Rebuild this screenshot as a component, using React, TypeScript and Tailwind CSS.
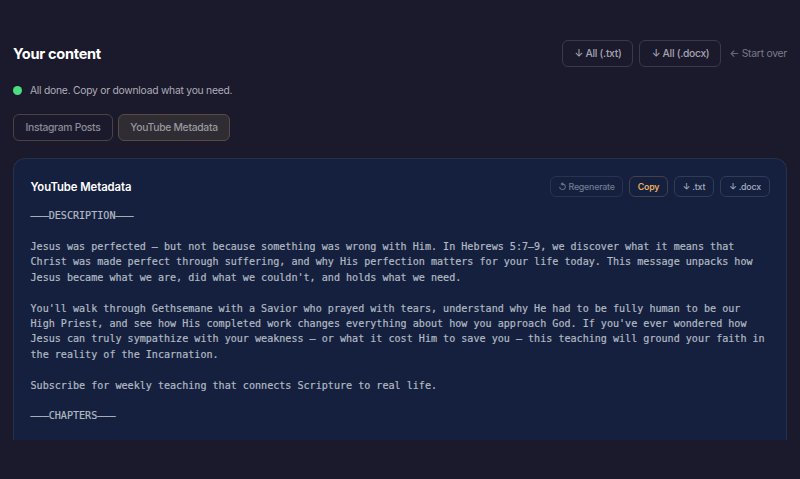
import React from 'react';

const tabs = [
  { id: 'instagram', label: 'Instagram Posts', width: 'w-[100px]' },
  { id: 'youtube', label: 'YouTube Metadata', width: 'w-[112px]' },
];

const content = `———DESCRIPTION———

Jesus was perfected — but not because something was wrong with Him. In Hebrews 5:7–9, we discover what it means that
Christ was made perfect through suffering, and why His perfection matters for your life today. This message unpacks how
Jesus became what we are, did what we couldn't, and holds what we need.

You'll walk through Gethsemane with a Savior who prayed with tears, understand why He had to be fully human to be our
High Priest, and see how His completed work changes everything about how you approach God. If you've ever wondered how
Jesus can truly sympathize with your weakness — or what it cost Him to save you — this teaching will ground your faith in
the reality of the Incarnation.

Subscribe for weekly teaching that connects Scripture to real life.

———CHAPTERS———`;

interface ActionButtonProps {
  className: string;
  children: React.ReactNode;
}

const ActionButton: React.FC<ActionButtonProps> = ({ className, children }) => (
  <button className={`flex items-center justify-center border whitespace-nowrap ${className}`}>
    {children}
  </button>
);

export default function App() {
  const activeTab = 'youtube';

  return (
    <div className="h-[479px] w-[800px] overflow-hidden bg-[#1b192c] px-[13px] pt-10 font-['Inter',sans-serif]">
      <header className="flex h-[27px] items-center justify-between">
        <h1 className="pt-0.5 text-[14.6px] font-bold tracking-[-0.3px] text-white">Your content</h1>
        <div className="flex items-center">
          <ActionButton className="mr-1.5 h-[27px] w-[71px] rounded-md border-[#3a394b] pt-px text-[10.3px] font-medium tracking-[-0.3px] text-[#a5a4b0]">
            ↓ All (.txt)
          </ActionButton>
          <ActionButton className="h-[27px] w-[82px] rounded-md border-[#3a394b] pt-px text-[10.3px] font-medium tracking-[-0.3px] text-[#a5a4b0]">
            ↓ All (.docx)
          </ActionButton>
          <button className="ml-2 pt-px text-[10.3px] whitespace-nowrap tracking-[-0.23px] text-[#7c7a88]">← Start over</button>
        </div>
      </header>

      <div className="mt-[15px] flex h-[17px] items-center gap-2">
        <span className="size-[9px] rounded-full bg-[#4ade80]" />
        <p className="pt-px text-[10.3px] tracking-[-0.24px] text-[#aeadb8]">All done. Copy or download what you need.</p>
      </div>

      <div className="mt-[15px] flex gap-[5px]">
        {tabs.map((tab) => (
          <button
            key={tab.id}
            className={`h-[27px] rounded-md border pt-px text-[10.3px] font-medium tracking-[-0.28px] whitespace-nowrap ${tab.width} ${
              tab.id === activeTab
                ? 'border-[#5b4a40] bg-[#302c33] text-[#9b989f]'
                : 'border-[#4c4340] text-[#8d8b98]'
            }`}
          >
            {tab.label}
          </button>
        ))}
      </div>

      <section className="mt-[17px] h-[282px] rounded-t-xl border border-b-0 border-[#25304d] bg-[#15203e] pt-[17px] pr-4 pl-[16.5px]">
        <div className="flex h-[21px] items-center justify-between">
          <h2 className="pt-px text-[11.3px] font-semibold tracking-[-0.07px] text-white">YouTube Metadata</h2>
          <div className="flex gap-1.5 text-[8.8px] font-medium tracking-[-0.2px]">
            <ActionButton className="h-[21px] w-[73px] rounded-md border-[#28334e] text-[#717c92]">
              ↺ Regenerate
            </ActionButton>
            <ActionButton className="h-[21px] w-[39px] rounded-md border-[#414247] font-semibold text-[#e5ad63]">
              Copy
            </ActionButton>
            <ActionButton className="h-[21px] w-10 rounded-md border-[#303c55] text-[#a6b0c0]">
              ↓ .txt
            </ActionButton>
            <ActionButton className="h-[21px] w-[50px] rounded-md border-[#303c55] text-[#a6b0c0]">
              ↓ .docx
            </ActionButton>
          </div>
        </div>
        <pre className="mt-[11px] font-['DejaVu_Sans_Mono',monospace] text-[10.08px] leading-[15.42px] text-[#b1bac3] [-webkit-text-stroke:0.2px]">
          {content}
        </pre>
      </section>
    </div>
  );
}
